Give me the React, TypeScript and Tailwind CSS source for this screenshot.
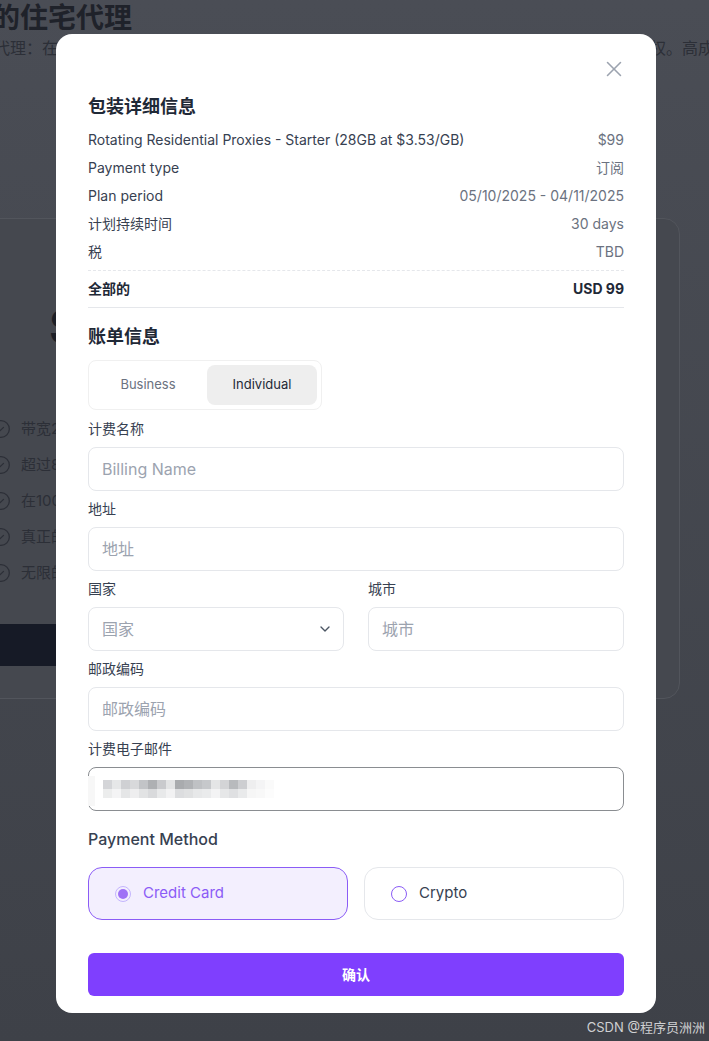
import { useState } from "react";
import { X, ChevronDown, CircleCheck } from "lucide-react";

const details = [
  { label: "Rotating Residential Proxies - Starter (28GB at $3.53/GB)", value: "$99" },
  { label: "Payment type", value: "订阅" },
  { label: "Plan period", value: "05/10/2025 - 04/11/2025" },
  { label: "计划持续时间", value: "30 days" },
  { label: "税", value: "TBD" },
];

const features = ["带宽2GB流量", "超过8000万个IP", "在100+个国家和地区", "真正的住宅IP地址", "无限的并发会话"];

// pixelated email (blurred in the screenshot)
const mosaicTop = ["#d4d5d8", "#e6e7e8", "#cfd0d3", "#d8d9db", "#c2c4c7", "#aeb0b3", "#c9cacd", "#e3e4e5", "#a9abae", "#b0b2b5", "#bfc1c4", "#c6c8cb", "#e4e5e6", "#d3d4d6", "#b8babd", "#cdced1", "#eeeeef", "#f4f4f5", "#fafafa"];
const mosaicBottom = ["#eceded", "#f4f4f5", "#e5e6e7", "#eeeeef", "#e2e3e4", "#d9dadc", "#e8e9ea", "#f2f2f3", "#dcdddf", "#e0e1e2", "#e7e8e9", "#eaebec", "#f3f3f4", "#e6e7e8", "#dfe0e2", "#e9eaeb", "#f6f6f6", "#f8f8f8", "#fcfcfc"];

const inputCls =
  "w-full h-11 rounded-lg border border-[#e5e7eb] px-[13px] text-base text-gray-800 placeholder:text-[#9ca3af] focus:outline-none bg-white";

function Field({ label, placeholder }: { label: string; placeholder: string }) {
  return (
    <div className="flex flex-col">
      <label className="text-sm leading-5 text-[#374151]">{label}</label>
      <input placeholder={placeholder} className={`${inputCls} mt-2`} />
    </div>
  );
}

export default function App() {
  const [tab, setTab] = useState<"business" | "individual">("individual");
  const [method, setMethod] = useState<"card" | "crypto">("card");

  return (
    <div className="relative h-[1041px] w-full overflow-hidden bg-gradient-to-b from-[#4a4d55] to-[#3e4148] font-['Inter','Noto_Sans_CJK_SC',sans-serif]">
      {/* page behind the modal */}
      <div className="flex flex-col">
        <h1 className="-ml-[8px] whitespace-nowrap text-[28px] font-bold leading-9 text-[#1f222a]">的住宅代理</h1>
        <p className="-ml-[6px] whitespace-nowrap text-base leading-6 text-[#2c2f37]">
          代理：在全球范围内拥有海量真实住宅网络资源，支持城市精准定位与会话轮换，均为合规授权。高成功率
        </p>
        <div className="-ml-[40px] mt-[158px] flex w-[720px] flex-col rounded-2xl border border-[#52555c] bg-[#45484f] px-8 pb-8 pt-[84px]">
          <div className="ml-[56px] text-5xl font-bold leading-none text-[#1c1f27]">$99</div>
          <ul className="mt-[60px] flex flex-col">
            {features.map((f) => (
              <li key={f} className="-ml-[2px] flex h-9 items-center gap-[10px] text-[15px] text-[#2c2f37]">
                <CircleCheck size={20} strokeWidth={1.5} className="text-[#2c2f37]" />
                {f}
              </li>
            ))}
          </ul>
          <div className="mt-[33px] h-[42px] w-full rounded-md bg-[#161a26]" />
        </div>
      </div>

      <div className="absolute bottom-[4px] right-[4px] text-[13px] text-[#cfd0d2]">CSDN @程序员洲洲</div>

      {/* modal */}
      <div className="absolute inset-0 pl-[56px] pt-[34px]">
        <div className="w-[600px] rounded-2xl bg-white px-8 pb-[17px] pt-[22px]">
          <div className="flex justify-end">
            <button className="-mr-[3px] text-[#9ca3af]">
              <X size={26} strokeWidth={1.4} />
            </button>
          </div>

          <h2 className="mt-[11px] text-lg font-bold leading-7 text-[#1f2937]">包装详细信息</h2>
          <div className="mt-[5px] flex flex-col">
            {details.map((d) => (
              <div key={d.label} className="flex h-7 items-center justify-between text-sm">
                <span className="text-[#374151]">{d.label}</span>
                <span className="text-[#6b7280]">{d.value}</span>
              </div>
            ))}
          </div>
          <div className="mt-1 border-t border-dashed border-[#e5e7eb]" />
          <div className="mt-1 flex h-7 items-center justify-between text-sm font-bold text-[#1f2937]">
            <span>全部的</span>
            <span>USD 99</span>
          </div>
          <div className="mt-1 border-t border-[#e5e7eb]" />

          <h2 className="mt-[15px] text-lg font-bold leading-7 text-[#1f2937]">账单信息</h2>
          <div className="mt-[9px] flex w-fit gap-1 rounded-lg border border-[#f0f0f0] p-1">
            <button
              onClick={() => setTab("business")}
              className={`h-10 w-[110px] rounded-lg text-[13px] ${tab === "business" ? "bg-[#eeeeee] text-[#1f2937]" : "text-[#6b7280]"}`}
            >
              Business
            </button>
            <button
              onClick={() => setTab("individual")}
              className={`h-10 w-[110px] rounded-lg text-[13px] ${tab === "individual" ? "bg-[#eeeeee] text-[#1f2937]" : "text-[#6b7280]"}`}
            >
              Individual
            </button>
          </div>

          <div className="mt-[9px] flex flex-col gap-2">
            <Field label="计费名称" placeholder="Billing Name" />
            <Field label="地址" placeholder="地址" />
            <div className="grid grid-cols-2 gap-6">
              <div className="flex flex-col">
                <label className="text-sm leading-5 text-[#374151]">国家</label>
                <div className="mt-2 flex h-11 items-center justify-between rounded-lg border border-[#e5e7eb] pl-[13px] pr-[10px]">
                  <span className="text-base text-[#9ca3af]">国家</span>
                  <ChevronDown size={16} className="text-[#4b5563]" />
                </div>
              </div>
              <Field label="城市" placeholder="城市" />
            </div>
            <Field label="邮政编码" placeholder="邮政编码" />
            <div className="flex flex-col">
              <label className="text-sm leading-5 text-[#374151]">计费电子邮件</label>
              <div className="relative mt-2 flex h-11 flex-col justify-center rounded-lg border border-[#8a8d91] px-[14px]">
                <div className="flex">
                  {mosaicTop.map((c, i) => (
                    <div key={i} className="h-[9px] w-[9px]" style={{ backgroundColor: c }} />
                  ))}
                </div>
                <div className="flex">
                  {mosaicBottom.map((c, i) => (
                    <div key={i} className="h-[9px] w-[9px]" style={{ backgroundColor: c }} />
                  ))}
                </div>
                <div className="absolute -left-px bottom-1 top-2 w-[7px] bg-[#f7f7f7]" />
              </div>
            </div>
          </div>

          <div className="mt-4 text-base font-medium leading-6 text-[#374151]">Payment Method</div>
          <div className="mt-4 grid grid-cols-2 gap-4">
            <button
              onClick={() => setMethod("card")}
              className={`flex h-[53px] items-center gap-3 rounded-[14px] border pl-[26px] ${method === "card" ? "border-[#8b5cf6] bg-[#f3effe] text-[#8b5cf6]" : "border-[#e5e7eb] bg-white text-[#374151]"}`}
            >
              <span
                className={`flex h-4 w-4 items-center justify-center rounded-full ${method === "card" ? "border border-[#c4b5fd]" : "border-[1.5px] border-[#8b5cf6]"}`}
              >
                {method === "card" && <span className="h-[10px] w-[10px] rounded-full bg-[#9f72f6]" />}
              </span>
              <span className="text-[15px]">Credit Card</span>
            </button>
            <button
              onClick={() => setMethod("crypto")}
              className={`flex h-[53px] items-center gap-3 rounded-[14px] border pl-[26px] ${method === "crypto" ? "border-[#8b5cf6] bg-[#f3effe] text-[#8b5cf6]" : "border-[#e5e7eb] bg-white text-[#374151]"}`}
            >
              <span
                className={`flex h-4 w-4 items-center justify-center rounded-full ${method === "crypto" ? "border border-[#c4b5fd]" : "border-[1.5px] border-[#8b5cf6]"}`}
              >
                {method === "crypto" && <span className="h-[10px] w-[10px] rounded-full bg-[#9f72f6]" />}
              </span>
              <span className="text-[15px]">Crypto</span>
            </button>
          </div>

          <button className="mt-[33px] h-[43px] w-full rounded-md bg-[#7f3ffe] text-sm font-bold text-white">确认</button>
        </div>
      </div>
    </div>
  );
}
